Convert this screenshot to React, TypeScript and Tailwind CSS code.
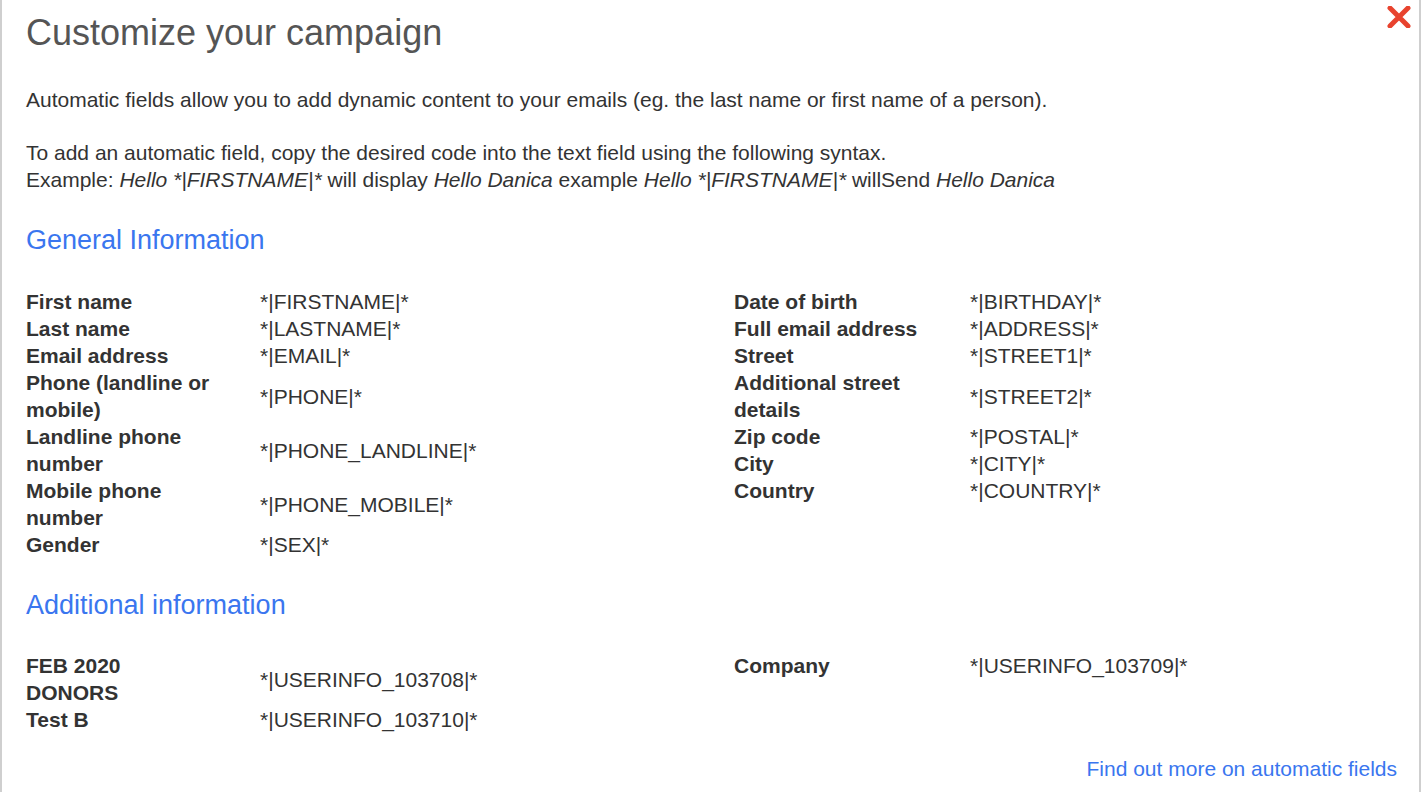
import React from "react";

type Field = { label: string; code: string };

const generalLeft: Field[] = [
  { label: "First name", code: "*|FIRSTNAME|*" },
  { label: "Last name", code: "*|LASTNAME|*" },
  { label: "Email address", code: "*|EMAIL|*" },
  { label: "Phone (landline or mobile)", code: "*|PHONE|*" },
  { label: "Landline phone number", code: "*|PHONE_LANDLINE|*" },
  { label: "Mobile phone number", code: "*|PHONE_MOBILE|*" },
  { label: "Gender", code: "*|SEX|*" },
];

const generalRight: Field[] = [
  { label: "Date of birth", code: "*|BIRTHDAY|*" },
  { label: "Full email address", code: "*|ADDRESS|*" },
  { label: "Street", code: "*|STREET1|*" },
  { label: "Additional street details", code: "*|STREET2|*" },
  { label: "Zip code", code: "*|POSTAL|*" },
  { label: "City", code: "*|CITY|*" },
  { label: "Country", code: "*|COUNTRY|*" },
];

const additionalLeft: Field[] = [
  { label: "FEB 2020 DONORS", code: "*|USERINFO_103708|*" },
  { label: "Test B", code: "*|USERINFO_103710|*" },
];

const additionalRight: Field[] = [
  { label: "Company", code: "*|USERINFO_103709|*" },
];

function FieldList({ fields, labelWidth }: { fields: Field[]; labelWidth: string }) {
  return (
    <div className="flex flex-col">
      {fields.map((f) => (
        <div key={f.code} className="flex items-center">
          <div className={labelWidth + " shrink-0 font-bold"}>{f.label}</div>
          <div className="flex-1">{f.code}</div>
        </div>
      ))}
    </div>
  );
}

function TwoColumns({ left, right }: { left: Field[]; right: Field[] }) {
  return (
    <div className="flex items-start">
      <div className="w-[708px] shrink-0">
        <FieldList fields={left} labelWidth="w-[234px] pr-[44px]" />
      </div>
      <div className="flex-1">
        <FieldList fields={right} labelWidth="w-[236px] pr-[46px]" />
      </div>
    </div>
  );
}

export default function App() {
  return (
    <div
      className="relative h-[792px] w-[1421px] border-x-2 border-[#cfcfcf] bg-white text-[21px] leading-[27px] text-[#333]"
      style={{ fontFamily: '"Liberation Sans", Arial, sans-serif' }}
    >
      <button className="absolute right-[7px] top-[5px] flex h-[24px] w-[26px] items-center justify-center">
        <svg width="24" height="22" viewBox="0 0 24 22">
          <path d="M3 2 L21 20 M21 2 L3 20" stroke="#e8432e" strokeWidth="5" strokeLinecap="round" />
        </svg>
      </button>

      <div className="pl-[24px] pr-[22px] pt-[12px]">
        <h1 className="text-[36px] leading-[41px] font-normal text-[#555]">Customize your campaign</h1>

        <p className="mt-[33px]">
          Automatic fields allow you to add dynamic content to your emails (eg. the last name or first name of a person).
        </p>
        <p className="mt-[26px]">
          To add an automatic field, copy the desired code into the text field using the following syntax.
          <br />
          Example: <i>Hello *|FIRSTNAME|*</i> will display <i>Hello Danica</i> example <i>Hello *|FIRSTNAME|*</i> willSend{" "}
          <i>Hello Danica</i>
        </p>

        <h2 className="mt-[32px] text-[27px] leading-[31px] text-[#3a76ef]">General Information</h2>
        <div className="mt-[32px]">
          <TwoColumns left={generalLeft} right={generalRight} />
        </div>

        <h2 className="mt-[32px] text-[27px] leading-[31px] text-[#3a76ef]">Additional information</h2>
        <div className="mt-[31px]">
          <TwoColumns left={additionalLeft} right={additionalRight} />
        </div>

        <div className="mt-[22px] flex justify-end">
          <a className="text-[#3a76ef]" href="#">
            Find out more on automatic fields
          </a>
        </div>
      </div>
    </div>
  );
}
